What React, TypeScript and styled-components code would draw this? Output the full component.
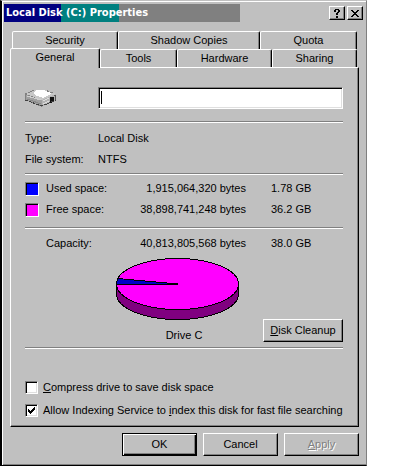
import React from "react";
import styled, { createGlobalStyle, css } from "styled-components";

const Global = createGlobalStyle`
  *, *::before, *::after { box-sizing: border-box; }
  body {
    margin: 0;
    background: #fff;
    color: #000;
    font: 11px/13px "Liberation Sans", Arial, sans-serif;
  }
  button, input { font: inherit; color: inherit; }
`;

const raised = css`
  border: 1px solid;
  border-color: #fff #000 #000 #fff;
  box-shadow: inset -1px -1px #808080;
`;

const sunken = css`
  border: 1px solid;
  border-color: #808080 #fff #fff #808080;
  box-shadow: inset 1px 1px #000, inset -1px -1px #dfdfdf;
`;

const Dialog = styled.main`
  margin-right: 33px;
  padding: 3px 3px 9px 2px;
  background: #c0c0c0;
  border: 1px solid;
  border-color: #c0c0c0 #808080 #000 #000;
  box-shadow: inset 1px 1px #fff, inset 0 -1px #808080;
  border-left-width: 2px;
`;

const TitleBar = styled.header`
  display: flex;
  align-items: center;
  justify-content: space-between;
  height: 18px;
`;

const Title = styled.h1`
  width: 236px;
  margin: 0;
  padding-left: 2px;
  color: #fff;
  font: bold 11px/18px "DejaVu Sans Condensed", "Liberation Sans", sans-serif;
  background: linear-gradient(90deg, #000080 57px, #008080 57px 115px, #808080 115px);
`;

const TitleButtons = styled.div`
  display: flex;
  gap: 2px;
`;

const TitleButton = styled.button`
  ${raised}
  display: grid;
  place-items: center;
  width: 16px;
  height: 14px;
  padding: 0;
  background: #c0c0c0;
`;

const Body = styled.div`
  padding: 9px 4px 0 6px;
`;

const TabRow = styled.div<{ $columns: string; $inset?: boolean }>`
  display: grid;
  grid-template-columns: ${(p) => p.$columns};
  align-items: end;
  padding: 0 2px 0 ${(p) => (p.$inset ? "2px" : "0")};
`;

const Tab = styled.button<{ $active?: boolean }>`
  height: ${(p) => (p.$active ? 20 : 18)}px;
  margin: ${(p) => (p.$active ? "-2px 0 -1px" : "0")};
  padding: 0 0 ${(p) => (p.$active ? 2 : 0)}px;
  position: relative;
  z-index: ${(p) => (p.$active ? 1 : 0)};
  background: #c0c0c0;
  border: 1px solid;
  border-color: #fff #000 transparent #fff;
  border-bottom-width: 0;
  border-radius: 2px 2px 0 0;
  box-shadow: inset -1px 0 #808080;
`;

const Panel = styled.section`
  padding: 19px 15px 9px 14px;
  border: 1px solid;
  border-color: #fff #000 #000 #fff;
  box-shadow: inset -1px -1px #808080;
`;

const Rule = styled.hr`
  height: 2px;
  margin: 0;
  border: 0;
  border-top: 1px solid #808080;
  border-bottom: 1px solid #fff;
`;

const NameRow = styled.div`
  display: grid;
  grid-template-columns: 73px 1fr;
  align-items: center;
  margin-bottom: 12px;
`;

const NameInput = styled.input`
  ${sunken}
  width: 100%;
  height: 22px;
  padding: 0 3px;
  background: linear-gradient(#000, #000) 2px 3px / 1px 13px no-repeat #fff;
  caret-color: transparent;
  border-radius: 0;
  outline: 0;
`;

const Facts = styled.dl`
  display: grid;
  grid-template-columns: 73px 1fr;
  row-gap: 8px;
  margin: 0;
  padding: 9px 0 7px;
  dd { margin: 0; }
`;

const SpaceTable = styled.table<{ $last?: boolean }>`
  width: 100%;
  margin: ${(p) => (p.$last ? "4px 0 0" : "3px 0 7px")};
  table-layout: fixed;
  border-collapse: collapse;
  td, th {
    height: 21px;
    padding: 0;
    font-weight: normal;
    text-align: left;
  }
`;

const SwatchCell = styled.td` width: 21px; `;
const LabelCell = styled.th` width: 75px; `;
const BytesCell = styled.td` && { width: 125px; text-align: right; } `;
const SizeCell = styled.td` && { padding-left: 25px; } `;

const Swatch = styled.span<{ $color: string }>`
  display: block;
  width: 14px;
  height: 14px;
  background: ${(p) => p.$color};
  border: 1px solid;
  border-color: #808080 #fff #fff #808080;
  box-shadow: inset 1px 1px #000;
`;

const ChartRow = styled.div`
  display: grid;
  grid-template-columns: 80px 158px 1fr;
  align-items: end;
  padding: 4px 0 5px;
`;

const Chart = styled.figure`
  grid-column: 2;
  margin: 0;
  svg { display: block; margin-left: 11px; }
  figcaption { margin-top: 9px; text-align: center; }
`;

const Button = styled.button<{ $primary?: boolean }>`
  ${raised}
  width: 100%;
  height: 23px;
  padding: 0;
  background: #c0c0c0;
  ${(p) => p.$primary && css`
    border-color: #000;
    box-shadow: inset 1px 1px #fff, inset -1px -1px #000, inset -2px -2px #808080;
  `}
  &:disabled { color: #808080; text-shadow: 1px 1px #fff; }
`;

const Options = styled.div`
  display: grid;
  gap: 10px;
  padding-top: 32px;
`;

const Option = styled.label`
  display: flex;
  align-items: center;
  gap: 5px;
  white-space: nowrap;
`;

const CheckBox = styled.input`
  ${sunken}
  appearance: none;
  width: 13px;
  height: 13px;
  margin: 0;
  background: #fff;
  &:checked {
    background: #fff url("data:image/svg+xml,%3Csvg xmlns='http://www.w3.org/2000/svg' viewBox='0 0 7 7' shape-rendering='crispEdges'%3E%3Cpath d='M0 2h1v1h1v1h1v-1h1v-1h1v-1h1v-1h1v3h-1v1h-1v1h-1v1h-1v1h-1v-1h-1v-1h-1z'/%3E%3C/svg%3E") center / 7px 7px no-repeat;
  }
`;

const Actions = styled.footer`
  display: grid;
  grid-template-columns: repeat(3, 75px);
  justify-content: end;
  gap: 6px;
  margin-top: 6px;
`;

const DriveIcon = () => (
  <svg width="32" height="20" viewBox="0 0 32 20" shapeRendering="crispEdges" aria-hidden="true">
    <path d="M0 6l8-4h14l9 4v6l-14 7-17-7z" fill="#808080" />
    <path d="M1 6l8-4h12l10 4-14 6z" fill="#c8c8c8" />
    <path d="M11 2h8l5 2 2 2-8 4-6-2-4-3z" fill="#fff" />
    <path d="M1 7l16 5v6l-16-6z" fill="#a0a0a0" />
    <path d="M2 8l14 4" stroke="#d0d0d0" />
    <path d="M2 11l14 5" stroke="#888" />
    <path d="M17 12l14-6v6l-14 7z" fill="#b4b4b4" />
    <path d="M18 13l6-3M18 16l6-3" stroke="#ddd" />
    <path d="M25 9h4v5h-2v1h-2z" fill="#111" />
    <path d="M29 7h2v6h-1v-5h-1z" fill="#555" />
    <path d="M0 12l17 6 14-6" fill="none" stroke="#404040" strokeDasharray="3 1" />
    <path d="M0 6l9-4M22 3l6 2" stroke="#808080" strokeDasharray="2 1" />
  </svg>
);

const PieChart = () => (
  <svg width="123" height="62" viewBox="0 0 123 62" role="img" aria-label="Drive usage">
    <g stroke="#000" shapeRendering="crispEdges">
      <path d="M.5 26v10a61 25.5 0 0 0 122 0v-10z" fill="#800080" />
      <ellipse cx="61.5" cy="26" rx="61" ry="25.5" fill="#f0f" />
      <path d="M61.5 26L2 20.5Q.5 23 .5 26z" fill="#0000c8" />
    </g>
  </svg>
);

type Space = { label: string; bytes: string; size: string; color?: string };

const usage: Space[] = [
  { label: "Used space:", bytes: "1,915,064,320 bytes", size: "1.78 GB", color: "#0000ff" },
  { label: "Free space:", bytes: "38,898,741,248 bytes", size: "36.2 GB", color: "#ff00ff" },
];
const capacity: Space[] = [
  { label: "Capacity:", bytes: "40,813,805,568 bytes", size: "38.0 GB" },
];

const Spaces = ({ rows, last }: { rows: Space[]; last?: boolean }) => (
  <SpaceTable $last={last}>
    <tbody>
      {rows.map((r) => (
        <tr key={r.label}>
          <SwatchCell>{r.color && <Swatch $color={r.color} />}</SwatchCell>
          <LabelCell scope="row">{r.label}</LabelCell>
          <BytesCell>{r.bytes}</BytesCell>
          <SizeCell>{r.size}</SizeCell>
        </tr>
      ))}
    </tbody>
  </SpaceTable>
);

export default function App() {
  return (
    <>
      <Global />
      <Dialog>
        <TitleBar>
          <Title>Local Disk (C:) Properties</Title>
          <TitleButtons>
            <TitleButton aria-label="Help">
              <svg width="6" height="9" viewBox="0 0 6 9" shapeRendering="crispEdges">
                <path d="M1 0h4v1h1v2h-1v1h-1v2h-2v-2h1v-1h1v-2h-2v2h-2v-2h1zM2 7h2v2h-2z" />
              </svg>
            </TitleButton>
            <TitleButton aria-label="Close">
              <svg width="8" height="7" viewBox="0 0 8 7" shapeRendering="crispEdges">
                <path d="M0 0h2v1h1v1h2v-1h1v-1h2v1h-1v1h-1v1h-1v1h1v1h1v1h1v1h-2v-1h-1v-1h-2v1h-1v1h-2v-1h1v-1h1v-1h1v-1h-1v-1h-1v-1h-1z" />
              </svg>
            </TitleButton>
          </TitleButtons>
        </TitleBar>
        <Body>
          <nav aria-label="Property pages">
            <TabRow $columns="106fr 142fr 97fr" $inset>
              <Tab>Security</Tab>
              <Tab>Shadow Copies</Tab>
              <Tab>Quota</Tab>
            </TabRow>
            <TabRow $columns="90fr 77fr 95fr 85fr">
              <Tab $active>General</Tab>
              <Tab>Tools</Tab>
              <Tab>Hardware</Tab>
              <Tab>Sharing</Tab>
            </TabRow>
          </nav>
          <Panel>
            <NameRow>
              <DriveIcon />
              <NameInput aria-label="Volume label" autoFocus />
            </NameRow>
            <Rule />
            <Facts>
              <dt>Type:</dt>
              <dd>Local Disk</dd>
              <dt>File system:</dt>
              <dd>NTFS</dd>
            </Facts>
            <Rule />
            <Spaces rows={usage} />
            <Rule />
            <Spaces rows={capacity} last />
            <ChartRow>
              <Chart>
                <PieChart />
                <figcaption>Drive C</figcaption>
              </Chart>
              <Button><u>D</u>isk Cleanup</Button>
            </ChartRow>
            <Rule />
            <Options>
              <Option>
                <CheckBox type="checkbox" />
                <span><u>C</u>ompress drive to save disk space</span>
              </Option>
              <Option>
                <CheckBox type="checkbox" defaultChecked />
                <span>Allow Indexing Service to <u>i</u>ndex this disk for fast file searching</span>
              </Option>
            </Options>
          </Panel>
          <Actions>
            <Button $primary>OK</Button>
            <Button>Cancel</Button>
            <Button disabled><u>A</u>pply</Button>
          </Actions>
        </Body>
      </Dialog>
    </>
  );
}
